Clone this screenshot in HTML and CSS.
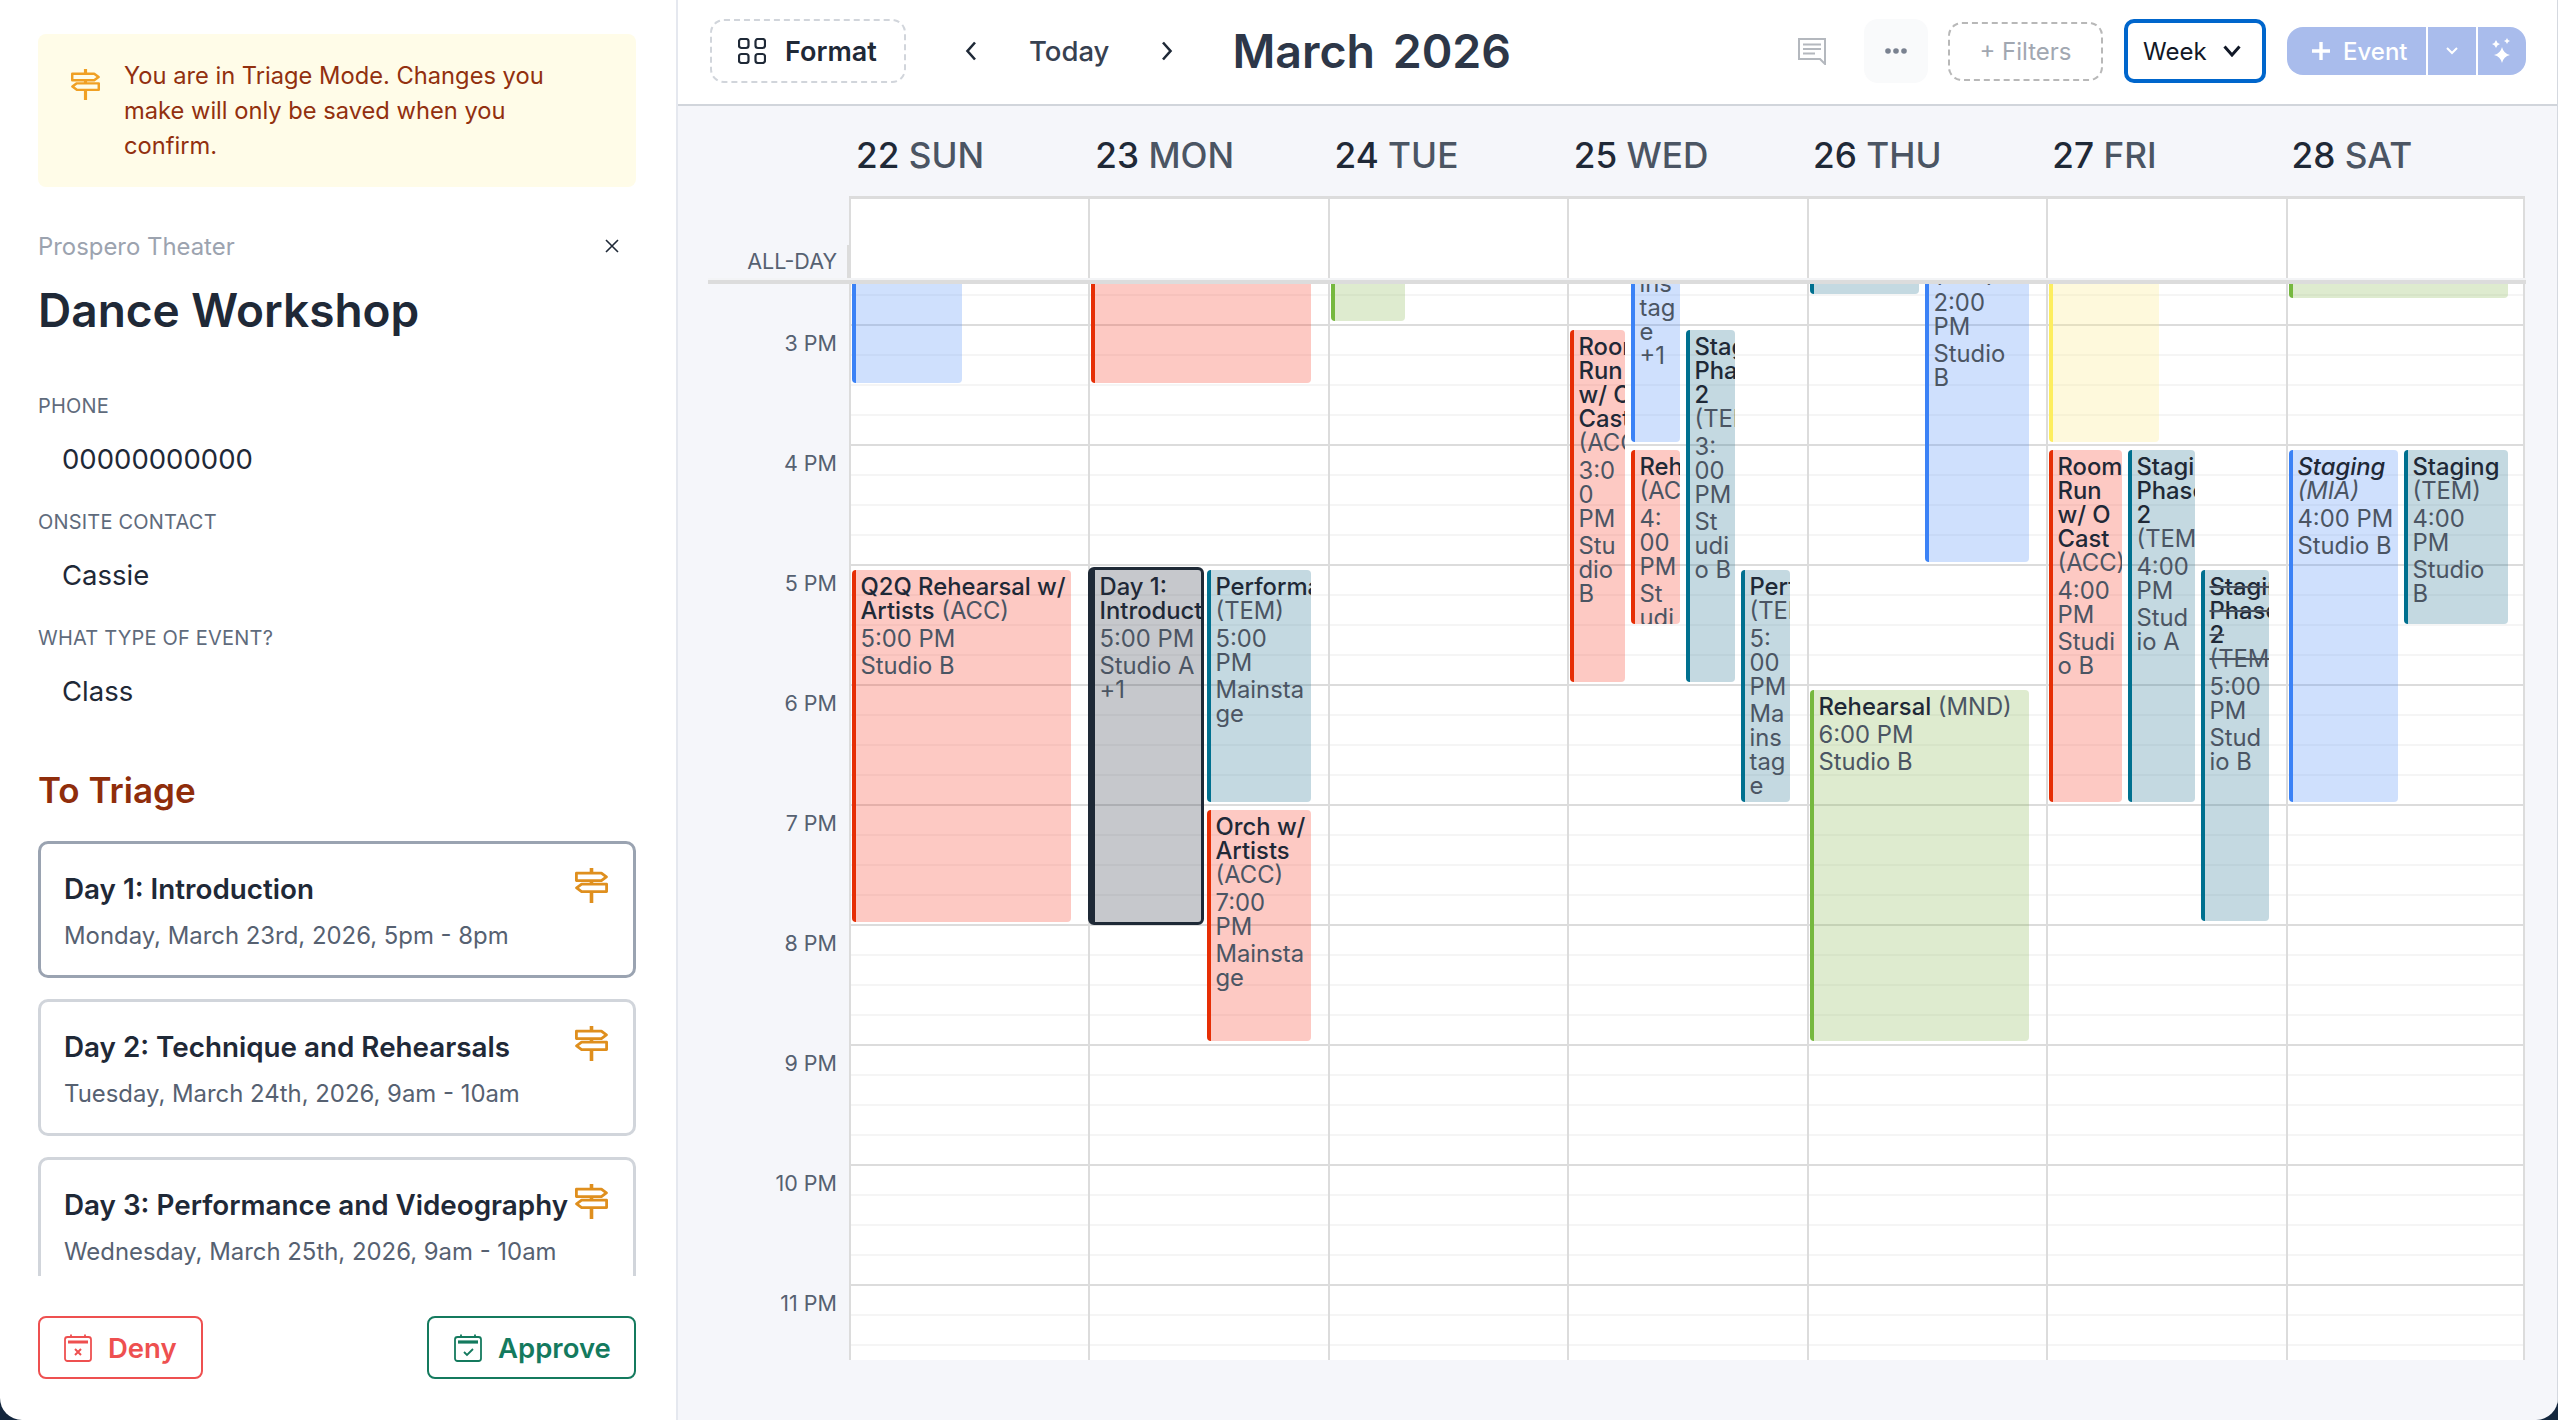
FILE: index.html
```html
<!DOCTYPE html>
<html>
  <head>
    <meta name="viewport" content="width=device-width, initial-scale=1.0" />
    <title>Triage</title>
    <link rel="stylesheet" href="styles.css">
  </head>
  <body>
    <svg width="0" height="0" class="defs">
      <symbol id="signpost" viewBox="0 0 33 35">
        <path d="M16.5 0v5M16.5 12.5v3.5M16.5 23v12" fill="none" stroke="currentColor" stroke-width="3.6" />
        <path d="M1.4 5.2h25l5 3.7-5 3.7h-25zM31.6 16.2h-25l-5 3.7 5 3.7h25z" fill="none" stroke="currentColor" stroke-width="2.8" stroke-linejoin="round" />
      </symbol>
    </svg>

    <div class="app">
      <aside class="sidebar">
        <div class="banner">
          <svg class="banner-icon"><use href="#signpost" /></svg>
          <p>You are in Triage Mode. Changes you make will only be saved when you confirm.</p>
        </div>

        <div class="org-row">
          <span class="org">Prospero Theater</span>
          <svg class="close" width="14" height="14" viewBox="0 0 14 14">
            <path d="M1 1l12 12M13 1L1 13" stroke="#1f2937" stroke-width="1.6" />
          </svg>
        </div>
        <h1>Dance Workshop</h1>

        <div class="field-label first">PHONE</div>
        <div class="field-value">00000000000</div>
        <div class="field-label">ONSITE CONTACT</div>
        <div class="field-value">Cassie</div>
        <div class="field-label">WHAT TYPE OF EVENT?</div>
        <div class="field-value">Class</div>

        <h2>To Triage</h2>
        <div class="triage-list">
          <div class="triage-card active">
            <div class="card-row">
              <span class="card-title">Day 1: Introduction</span>
              <svg class="card-icon"><use href="#signpost" /></svg>
            </div>
            <div class="card-sub">Monday, March 23rd, 2026, 5pm - 8pm</div>
          </div>
          <div class="triage-card">
            <div class="card-row">
              <span class="card-title">Day 2: Technique and Rehearsals</span>
              <svg class="card-icon"><use href="#signpost" /></svg>
            </div>
            <div class="card-sub">Tuesday, March 24th, 2026, 9am - 10am</div>
          </div>
          <div class="triage-card">
            <div class="card-row">
              <span class="card-title">Day 3: Performance and Videography</span>
              <svg class="card-icon"><use href="#signpost" /></svg>
            </div>
            <div class="card-sub">Wednesday, March 25th, 2026, 9am - 10am</div>
          </div>
        </div>

        <div class="actions">
          <button class="action deny">
            <svg width="28" height="28" viewBox="0 0 28 28" fill="none" stroke="currentColor">
              <rect x="1" y="3" width="26" height="24" rx="2.5" stroke-width="1.8" />
              <path d="M4 8h20" stroke-width="3.2" />
              <path d="M7 0.5v3M21 0.5v3" stroke-width="1.8" />
              <path d="M11 15l6 6M17 15l-6 6" stroke-width="2" />
            </svg>
            Deny
          </button>
          <button class="action approve">
            <svg width="28" height="28" viewBox="0 0 28 28" fill="none" stroke="currentColor">
              <rect x="1" y="3" width="26" height="24" rx="2.5" stroke-width="1.8" />
              <path d="M4 8h20" stroke-width="3.2" />
              <path d="M7 0.5v3M21 0.5v3" stroke-width="1.8" />
              <path d="M10 18l3 3 6-6" stroke-width="1.8" />
            </svg>
            Approve
          </button>
        </div>
      </aside>

      <main class="main">
        <header class="topbar">
          <button class="format-btn">
            <svg width="28" height="26" viewBox="0 0 28 26" fill="none" stroke="#1f2937" stroke-width="2.2">
              <rect x="1" y="1" width="9.5" height="9" rx="2.5" />
              <rect x="17.5" y="1" width="9.5" height="9" rx="2.5" />
              <rect x="1" y="16" width="9.5" height="9" rx="2.5" />
              <rect x="17.5" y="16" width="9.5" height="9" rx="2.5" />
            </svg>
            Format
          </button>
          <svg class="nav-prev" width="12" height="20" viewBox="0 0 12 20" fill="none" stroke="#1f2937" stroke-width="2.6">
            <path d="M10 1.5L2.5 10l7.5 8.5" />
          </svg>
          <span class="today">Today</span>
          <svg class="nav-next" width="12" height="20" viewBox="0 0 12 20" fill="none" stroke="#1f2937" stroke-width="2.6">
            <path d="M2 1.5L9.5 10 2 18.5" />
          </svg>
          <div class="month">March 2026</div>

          <div class="topbar-right">
            <svg class="comment" width="28" height="27" viewBox="0 0 28 27" fill="none" stroke="#b4b8be" stroke-width="2">
              <path d="M1 1h26v25l-5-5H1z" />
              <path d="M5 6.5h18M5 11h18M5 15.5h12" />
            </svg>
            <button class="more-btn">
              <svg width="24" height="6" viewBox="0 0 24 6" fill="#7a8290">
                <circle cx="4" cy="3" r="2.8" /><circle cx="12" cy="3" r="2.8" /><circle cx="20" cy="3" r="2.8" />
              </svg>
            </button>
            <button class="filters-btn">+ Filters</button>
            <button class="week-btn">
              Week
              <svg width="18" height="12" viewBox="0 0 18 12" fill="none" stroke="#111827" stroke-width="3">
                <path d="M1.5 1.5L9 10l7.5-8.5" />
              </svg>
            </button>
            <div class="event-group">
              <span class="event-main">
                <svg width="22" height="22" viewBox="0 0 22 22" stroke="#fff" stroke-width="3.4"><path d="M11 2v18M2 11h18" /></svg>
                Event
              </span>
              <span class="event-drop">
                <svg width="12" height="8" viewBox="0 0 12 8" fill="none" stroke="#fff" stroke-width="2"><path d="M1 1l5 5 5-5" /></svg>
              </span>
              <span class="event-spark">
                <svg width="24" height="26" viewBox="0 0 24 26" fill="#fff">
                  <path d="M12 9Q13.5 15.5 20 17Q13.5 18.5 12 25Q10.5 18.5 4 17Q10.5 15.5 12 9z" />
                  <path d="M6 2Q6.8 5.2 10 6Q6.8 6.8 6 10Q5.2 6.8 2 6Q5.2 5.2 6 2z" />
                  <path d="M17 0Q17.6 2.4 20 3Q17.6 3.6 17 6Q16.4 3.6 14 3Q16.4 2.4 17 0z" />
                </svg>
              </span>
            </div>
          </div>
        </header>

        <div class="day-heads">
          <div></div>
          <div class="day-head"><b>22</b> SUN</div>
          <div class="day-head"><b>23</b> MON</div>
          <div class="day-head"><b>24</b> TUE</div>
          <div class="day-head"><b>25</b> WED</div>
          <div class="day-head"><b>26</b> THU</div>
          <div class="day-head"><b>27</b> FRI</div>
          <div class="day-head"><b>28</b> SAT</div>
        </div>

        <div class="allday">
          <div class="allday-label">ALL-DAY</div>
          <div class="allday-cell"></div>
          <div class="allday-cell"></div>
          <div class="allday-cell"></div>
          <div class="allday-cell"></div>
          <div class="allday-cell"></div>
          <div class="allday-cell"></div>
          <div class="allday-cell last"></div>
        </div>
        <div class="band"></div>

        <div class="week">
          <div class="hours">
            <div>3 PM</div>
            <div>4 PM</div>
            <div>5 PM</div>
            <div>6 PM</div>
            <div>7 PM</div>
            <div>8 PM</div>
            <div>9 PM</div>
            <div>10 PM</div>
            <div>11 PM</div>
          </div>

          <!-- 22 SUN -->
          <div class="day">
            <div class="event blue" style="top:-20px;left:1px;width:110px;height:119px"></div>
            <div class="event red" style="top:286px;left:1px;width:219px;height:352px">
              <div class="ev-title"><b>Q2Q Rehearsal w/ Artists</b> (ACC)</div>
              <div class="ev-line">5:00 PM</div>
              <div class="ev-line">Studio B</div>
            </div>
          </div>

          <!-- 23 MON -->
          <div class="day">
            <div class="event red" style="top:-20px;left:0.5px;width:220px;height:119px"></div>
            <div class="event gray selected" style="top:283px;left:-2.5px;width:116px;height:358px">
              <div class="ev-title"><b>Day 1: Introduction</b></div>
              <div class="ev-line">5:00 PM</div>
              <div class="ev-line">Studio A +1</div>
            </div>
            <div class="event teal" style="top:286px;left:116.5px;width:104px;height:232px">
              <div class="ev-title"><b>Performance</b> (TEM)</div>
              <div class="ev-line">5:00 PM</div>
              <div class="ev-line">Mainstage</div>
            </div>
            <div class="event red" style="top:526px;left:116.5px;width:104px;height:231px">
              <div class="ev-title"><b>Orch w/ Artists</b> (ACC)</div>
              <div class="ev-line">7:00<br>PM</div>
              <div class="ev-line">Mainstage</div>
            </div>
          </div>

          <!-- 24 TUE -->
          <div class="day">
            <div class="event green" style="top:-20px;left:1px;width:73.5px;height:57px"></div>
          </div>

          <!-- 25 WED -->
          <div class="day">
            <div class="event red" style="top:46px;left:0.5px;width:55px;height:352px">
              <div class="ev-title"><b>Room Run w/ O Cast</b> (ACC)</div>
              <div class="ev-line">3:00 PM</div>
              <div class="ev-line">Studio B</div>
            </div>
            <div class="event blue" style="top:-192px;left:61.5px;width:49px;height:350px">
              <div class="ev-title"><b>Staging Phase 2</b> (MIA)</div>
              <div class="ev-line">2:<wbr>00 PM</div>
              <div class="ev-line">Ma<wbr>ins<wbr>tag<wbr>e +1</div>
            </div>
            <div class="event red" style="top:166px;left:61.5px;width:49px;height:174px">
              <div class="ev-title"><b>Rehearsal</b> (ACC)</div>
              <div class="ev-line">4:<wbr>00 PM</div>
              <div class="ev-line">St<wbr>udi<wbr>o B</div>
            </div>
            <div class="event teal" style="top:46px;left:116.5px;width:49px;height:352px">
              <div class="ev-title"><b>Staging Phase 2</b> (TEM)</div>
              <div class="ev-line">3:<wbr>00 PM</div>
              <div class="ev-line">St<wbr>udi<wbr>o B</div>
            </div>
            <div class="event teal" style="top:286px;left:171.5px;width:49px;height:232px">
              <div class="ev-title"><b>Performance</b> (TEM)</div>
              <div class="ev-line">5:<wbr>00 PM</div>
              <div class="ev-line">Ma<wbr>ins<wbr>tag<wbr>e</div>
            </div>
          </div>

          <!-- 26 THU -->
          <div class="day">
            <div class="event teal" style="top:-20px;left:1px;width:109px;height:30px"></div>
            <div class="event blue" style="top:-74px;left:116px;width:104px;height:352px">
              <div class="ev-title"><b>Staging Phase 2</b> (MIA)</div>
              <div class="ev-line">2:00 PM</div>
              <div class="ev-line">Studio B</div>
            </div>
            <div class="event green" style="top:406px;left:1px;width:219px;height:351px">
              <div class="ev-title"><b>Rehearsal</b> (MND)</div>
              <div class="ev-line">6:00 PM</div>
              <div class="ev-line">Studio B</div>
            </div>
          </div>

          <!-- 27 FRI -->
          <div class="day">
            <div class="event yellow" style="top:-20px;left:0.5px;width:110px;height:178px"></div>
            <div class="event red" style="top:166px;left:0.5px;width:73px;height:352px">
              <div class="ev-title"><b>Room Run w/ O Cast</b> (ACC)</div>
              <div class="ev-line">4:00 PM</div>
              <div class="ev-line">Studio B</div>
            </div>
            <div class="event teal" style="top:166px;left:79.5px;width:67px;height:352px">
              <div class="ev-title"><b>Staging Phase 2</b> (TEM)</div>
              <div class="ev-line">4:00 PM</div>
              <div class="ev-line">Studio A</div>
            </div>
            <div class="event teal cancelled" style="top:286px;left:152.5px;width:68px;height:351px">
              <div class="ev-title"><b>Staging Phase 2</b> (TEM)</div>
              <div class="ev-line">5:00 PM</div>
              <div class="ev-line">Stud<wbr>io B</div>
            </div>
          </div>

          <!-- 28 SAT -->
          <div class="day last">
            <div class="event green" style="top:-20px;left:1px;width:219px;height:34px"></div>
            <div class="event blue tentative" style="top:166px;left:1px;width:109px;height:352px">
              <div class="ev-title"><b>Staging</b> (MIA)</div>
              <div class="ev-line">4:00 PM</div>
              <div class="ev-line">Studio B</div>
            </div>
            <div class="event teal" style="top:166px;left:116px;width:104px;height:174px">
              <div class="ev-title"><b>Staging</b> (TEM)</div>
              <div class="ev-line">4:00 PM</div>
              <div class="ev-line">Studio B</div>
            </div>
          </div>
        </div>
      </main>
    </div>
  </body>
</html>
```

FILE: styles.css
```css
* {
  box-sizing: border-box;
}
html,
body {
  margin: 0;
  height: 1420px;
  overflow: hidden;
}
body {
  background: #13263d;
  font-family: Inter, "Noto Sans", sans-serif;
  color: #1f2937;
}
button {
  font-family: inherit;
  background: none;
  padding: 0;
}
.defs {
  position: absolute;
}
.app {
  display: flex;
  height: 1420px;
  border-radius: 0 0 22px 22px;
  overflow: hidden;
}

/* sidebar */
.sidebar {
  width: 678px;
  flex: none;
  display: flex;
  flex-direction: column;
  padding: 34px 40px 0 38px;
  background: #fff;
  border-right: 2px solid #e5e8ef;
}
.banner {
  display: flex;
  height: 153px;
  padding: 24px 70px 0 33px;
  border-radius: 8px;
  background: #fffce8;
  color: #92300f;
  font-size: 23.7px;
  line-height: 35px;
}
.banner p {
  margin: 0;
}
.banner-icon {
  flex: none;
  width: 29px;
  height: 31px;
  margin: 11px 24px 0 0;
  color: #f0a024;
}
.org-row {
  display: flex;
  justify-content: space-between;
  align-items: center;
  height: 30px;
  margin-top: 44px;
  padding-right: 17px;
}
.org {
  font-size: 23.9px;
  color: #9ca3af;
}
h1 {
  margin: 19px 0 0;
  font-size: 46px;
  line-height: 60px;
  font-weight: 600;
  color: #1f2937;
}
.field-label {
  height: 26px;
  margin-top: 30px;
  font-size: 20px;
  line-height: 26px;
  letter-spacing: 0.2px;
  color: #5f6b7c;
}
.field-label.first {
  margin-top: 53px;
}
.field-value {
  height: 40px;
  margin-top: 20px;
  padding-left: 24px;
  font-size: 27.5px;
  line-height: 40px;
  color: #1f2937;
}
h2 {
  margin: 57px 0 0;
  font-size: 35px;
  line-height: 44px;
  font-weight: 600;
  color: #8f2d0b;
}
.triage-list {
  height: 435px;
  margin-top: 29px;
  overflow: hidden;
  flex: none;
}
.triage-card {
  height: 137px;
  margin-bottom: 21px;
  padding: 27px 25px 0 23px;
  border: 3px solid #d1d5db;
  border-radius: 10px;
}
.triage-card.active {
  border-color: #9aa3b1;
}
.card-row {
  display: flex;
  justify-content: space-between;
  height: 36px;
}
.card-title {
  font-size: 27.8px;
  line-height: 36px;
  font-weight: 600;
  color: #1f2937;
}
.card-icon {
  flex: none;
  width: 33px;
  height: 35px;
  margin-top: -3px;
  color: #df8f1e;
}
.card-sub {
  margin-top: 12px;
  font-size: 23.9px;
  line-height: 34px;
  color: #566171;
}
.actions {
  display: flex;
  justify-content: space-between;
  margin-top: 40px;
}
.action {
  display: flex;
  align-items: center;
  gap: 16px;
  height: 63px;
  padding: 0 0 0 24px;
  border: 2.5px solid currentColor;
  border-radius: 8px;
  font-size: 27.5px;
  font-weight: 600;
}
.action svg {
  flex: none;
}
.deny {
  width: 165px;
  color: #ee5050;
}
.approve {
  width: 209px;
  padding-left: 25px;
  color: #147a5e;
}

/* top bar */
.main {
  flex: 1;
  display: flex;
  flex-direction: column;
  background: #f5f6fa;
  border-right: 1px solid #d5d9e0;
}
.topbar {
  display: flex;
  align-items: center;
  flex: none;
  height: 106px;
  padding: 0 31px 2px 32px;
  background: #fff;
  border-bottom: 2px solid #d1d5db;
}
.format-btn {
  display: flex;
  align-items: center;
  gap: 19px;
  width: 196px;
  height: 64px;
  padding-left: 26px;
  border: 2px dashed #d1d5db;
  border-radius: 14px;
  font-size: 27px;
  font-weight: 600;
  color: #1f2937;
}
.nav-prev {
  margin-left: 59px;
}
.today {
  margin-left: 52px;
  font-size: 27.5px;
  font-weight: 500;
  color: #374151;
}
.nav-next {
  margin-left: 52px;
}
.month {
  margin-left: 59px;
  font-size: 46.5px;
  font-weight: 600;
  word-spacing: 6px;
  color: #2d3748;
}
.topbar-right {
  display: flex;
  align-items: center;
  margin-left: auto;
}
.more-btn {
  display: flex;
  align-items: center;
  justify-content: center;
  width: 64px;
  height: 64px;
  margin-left: 38px;
  border: 0;
  border-radius: 14px;
  background: #f9fafb;
}
.filters-btn {
  width: 155px;
  height: 59px;
  margin-left: 20px;
  border: 2px dashed #b8b8b8;
  border-radius: 14px;
  font-size: 24px;
  color: #a1a7b1;
}
.week-btn {
  display: flex;
  align-items: center;
  justify-content: space-between;
  width: 142px;
  height: 64px;
  margin-left: 21px;
  padding: 0 21px 0 15px;
  border: 4px solid #0066cc;
  border-radius: 10px;
  background: #fff;
  font-size: 24px;
  color: #111827;
}
.event-group {
  display: flex;
  height: 48px;
  margin-left: 21px;
  border-radius: 16px;
  overflow: hidden;
  color: #fff;
  font-size: 24px;
  font-weight: 500;
}
.event-group span {
  display: flex;
  align-items: center;
  background: #a9bcec;
}
.event-main {
  width: 139px;
  gap: 11px;
  padding-left: 23px;
}
.event-drop {
  justify-content: center;
  width: 48px;
  margin-left: 2px;
}
.event-spark {
  justify-content: center;
  width: 48px;
  margin-left: 2px;
}

/* calendar */
.allday,
.week {
  display: grid;
  grid-template-columns: 170.5px repeat(7, 239.5px);
}
.day-heads {
  display: grid;
  grid-template-columns: 171px repeat(7, 239.25px);
  flex: none;
  height: 90px;
  padding-top: 8px;
  align-items: center;
}
.day-head {
  padding-left: 7px;
  font-size: 35.2px;
  font-weight: 500;
  color: #4b5563;
}
.day-head b {
  font-weight: 500;
  color: #1f2937;
}
.allday {
  flex: none;
  height: 82px;
}
.allday-label {
  align-self: end;
  height: 33px;
  padding-right: 9.5px;
  border-right: 2px solid #dcdcdc;
  text-align: right;
  font-size: 21.5px;
  line-height: 33px;
  color: #566171;
}
.allday-cell {
  background: #fff;
  border-top: 3px solid #dcdcdc;
  border-left: 2px solid #dcdcdc;
}
.allday-cell.last {
  border-right: 2px solid #dcdcdc;
}
.band {
  flex: none;
  width: 1818px;
  height: 6px;
  margin-left: 30px;
  border-top: 2px solid #f3f4f6;
  background: #dcdcdc;
}
.week {
  flex: none;
  height: 1076px;
  overflow: hidden;
}
.hours {
  padding-top: 42px;
  text-align: right;
  font-size: 21.5px;
  color: #566171;
}
.hours div {
  height: 120px;
  padding-right: 11.5px;
  line-height: 34px;
}
.day {
  position: relative;
  border-left: 2px solid #dcdcdc;
  background-color: #fff;
  background-image:
    repeating-linear-gradient(to bottom, #dcdcdc 0, #dcdcdc 2px, transparent 2px, transparent 120px),
    repeating-linear-gradient(to bottom, #f5f5f5 0, #f5f5f5 2px, transparent 2px, transparent 30px);
  background-position: 0 40px, 0 10px;
  background-size: 100% 120px, 100% 30px;
  background-repeat: repeat-y;
}
.day.last {
  border-right: 2px solid #dcdcdc;
}
.event {
  position: absolute;
  margin-left: 0.5px;
  padding: 5px 2px 0 4.5px;
  border-left: 4px solid;
  border-radius: 4px;
  overflow: hidden;
  font-size: 23.8px;
  line-height: 24px;
  color: #4b5563;
}
.ev-title {
  min-width: min-content;
}
.ev-title b {
  font-weight: 500;
  color: #1f2937;
}
.ev-line {
  margin-top: 3.5px;
  overflow-wrap: anywhere;
}
.red {
  background: rgba(248, 75, 55, 0.3);
  border-color: #e62e05;
}
.blue {
  background: rgba(95, 152, 248, 0.3);
  border-color: #3b82f6;
}
.teal {
  background: rgba(58, 128, 155, 0.3);
  border-color: #00708f;
}
.green {
  background: rgba(145, 188, 95, 0.3);
  border-color: #76b83f;
}
.yellow {
  background: rgba(252, 235, 138, 0.3);
  border-color: #fdee5f;
}
.gray {
  background: rgba(65, 72, 85, 0.3);
}
.selected {
  border: 3px solid #1e2936;
  border-left-width: 7px;
  border-radius: 6px;
}
.cancelled .ev-title {
  text-decoration: line-through;
}
.tentative .ev-title {
  font-style: italic;
}
```
